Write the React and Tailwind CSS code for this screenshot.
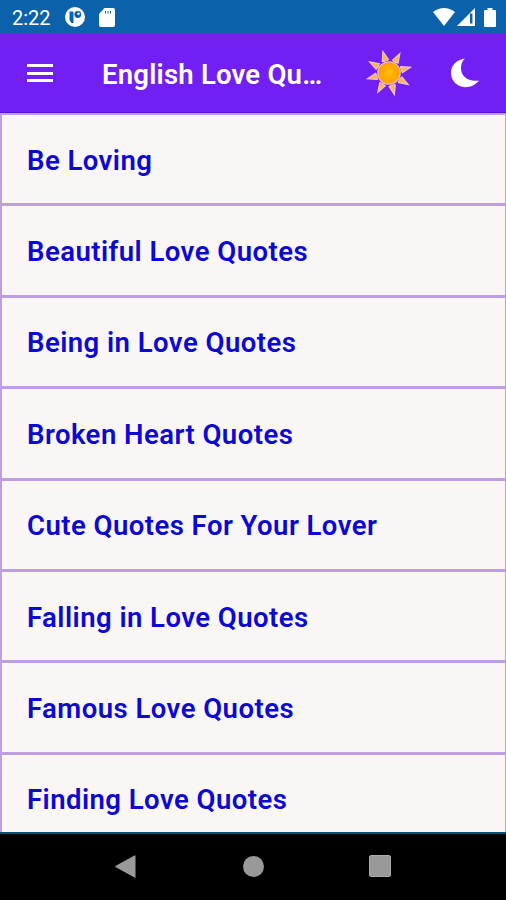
const quotes = [
  "Be Loving",
  "Beautiful Love Quotes",
  "Being in Love Quotes",
  "Broken Heart Quotes",
  "Cute Quotes For Your Lover",
  "Falling in Love Quotes",
  "Famous Love Quotes",
  "Finding Love Quotes",
];

const rayAngles = [-16, 29, 75, 121, 166, 210, 255, 300];

function StatusBar() {
  return (
    <div className="flex h-[34px] shrink-0 items-center bg-[#0b62ab] pl-3 text-white">
      <span className="mt-0.5 w-[53px] text-[20px] leading-none">2:22</span>
      <svg className="h-5 w-5" viewBox="0 0 20 20">
        <circle cx="10" cy="10" r="10" fill="#fff" />
        <path d="M4.500 4.500H8.500V16H6.500Q4.500 14.500 4.500 12Z" fill="#0b62ab" />
        <circle cx="12.800" cy="7.500" r="3.400" fill="#0b62ab" />
        <circle cx="13.500" cy="6.800" r="1.200" fill="#fff" />
      </svg>
      <svg className="ml-3.5 h-[19px] w-4" viewBox="0 0 16 19">
        <path d="M5.500 0H14q2 0 2 2v15q0 2-2 2H2q-2 0-2-2V6Z" fill="#fff" />
        <path d="M6.500 3v2.500M9 3v2.500M11.500 3v2.500" stroke="#0b62ab" strokeWidth="1" />
      </svg>
      <svg className="ml-auto h-[18px] w-[22px]" viewBox="0 0 22 18">
        <path d="M0 4Q11-4 22 4L11 18Z" fill="#fff" />
      </svg>
      <svg className="ml-0.5 h-[18px] w-[18px]" viewBox="0 0 18 18">
        <path d="M18 0V18H0Z" fill="#fff" />
        <path d="M14.200 5.500V15.500" stroke="#0b62ab" strokeWidth="2.500" />
      </svg>
      <svg className="ml-[9px] mr-[10px] h-[19px] w-3" viewBox="0 0 12 19">
        <path d="M3.500 0h5v2H11q1 0 1 1v15q0 1-1 1H1q-1 0-1-1V3q0-1 1-1h2.500Z" fill="#fff" />
      </svg>
    </div>
  );
}

function Sun() {
  return (
    <svg className="h-[46px] w-[46px] shrink-0" viewBox="-23 -23 46 46">
      <defs>
        <radialGradient id="sunFill">
          <stop offset="0" stopColor="#ffbd00" />
          <stop offset="1" stopColor="#ff9d00" />
        </radialGradient>
      </defs>
      {rayAngles.map((angle) => (
        <path
          key={angle}
          d="M-3.200-13L0-22.300L3.200-13Q0-11.800-3.200-13Z"
          transform={`rotate(${angle})`}
          fill="#f9b64a"
          stroke="#f0c5cf"
          strokeWidth="1.200"
        />
      ))}
      <circle r="11.200" fill="url(#sunFill)" stroke="#f3bba0" strokeWidth="1.300" />
    </svg>
  );
}

function Toolbar() {
  return (
    <div className="flex h-[79px] shrink-0 items-center border-b border-[#5a12d2] bg-[#711ff2] pl-[27px] text-white">
      <div className="flex w-[75px] flex-col gap-[4.500px]">
        <span className="h-[3px] w-[26px] bg-white" />
        <span className="h-[3px] w-[26px] bg-white" />
        <span className="h-[3px] w-[26px] bg-white" />
      </div>
      <h1 className="mt-1 w-[264px] whitespace-nowrap text-[27.500px] font-semibold leading-8 tracking-[0.220px]">English Love Qu…</h1>
      <Sun />
      <svg className="ml-[38px] h-[30px] w-[30px]" viewBox="0 0 30 30">
        <path d="M15 .5C10.500 4 9.300 13 14 18.200C18 22.800 24 23.200 29 22.500C23 30.500 10 32 3.500 23C-2.500 14 2.500 2 15 .5Z" fill="#fff" />
      </svg>
    </div>
  );
}

function NavigationBar() {
  return (
    <div className="flex h-[68px] shrink-0 items-center border-t-2 border-[#07516f] bg-black pb-[1.500px] pl-[115px]">
      <svg className="h-[23px] w-[21px]" viewBox="0 0 21 23">
        <path d="M19.500 .5q1-.5 1 .5v21q0 1-1 .5L.8 12.300q-1-.8 0-1.600Z" fill="#999" />
      </svg>
      <span className="ml-[107px] h-[21px] w-[21px] rounded-full bg-[#999]" />
      <span className="ml-[105px] h-[22px] w-[22px] rounded-[2px] border border-[#aaa] bg-[#999]" />
    </div>
  );
}

export default function App() {
  return (
    <div className="flex h-[900px] w-[506px] flex-col overflow-hidden bg-black font-[Roboto,sans-serif]">
      <StatusBar />
      <Toolbar />
      <ul className="min-h-0 flex-1 overflow-hidden border-l-2 border-r border-t-2 border-[#bd9de3] bg-[#faf6f5]">
        {quotes.map((quote) => (
          <li key={quote} className="flex h-[91.400px] items-center border-b-3 border-[#bd9de3] pl-[25px] pt-[3px]">
            <span className="text-[27.500px] font-semibold leading-8 tracking-[0.460px] text-[#0c08d4]">{quote}</span>
          </li>
        ))}
      </ul>
      <NavigationBar />
    </div>
  );
}
